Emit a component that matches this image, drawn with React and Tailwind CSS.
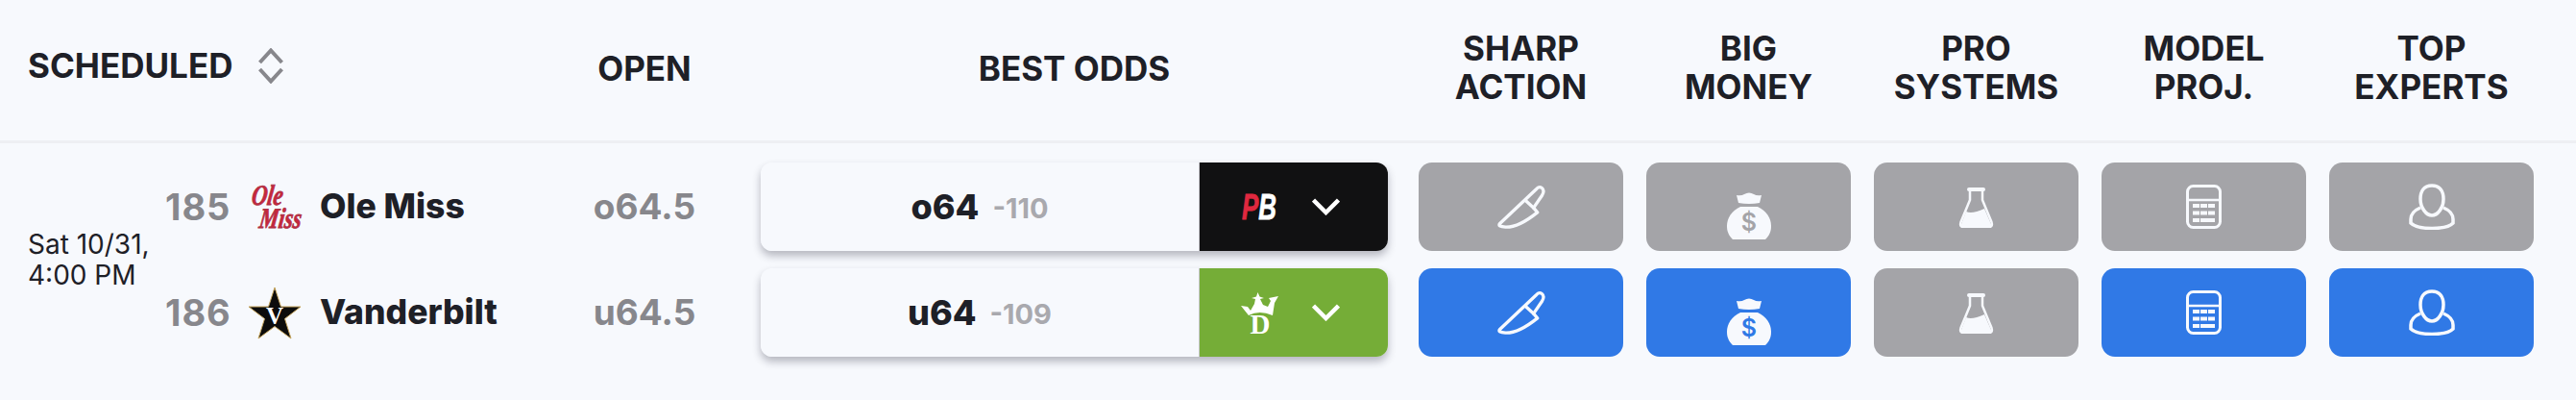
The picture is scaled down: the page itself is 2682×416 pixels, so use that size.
const Knife = () => (
  <svg width="50" height="47" viewBox="295 128 150 140" fill="none" stroke="currentColor" strokeWidth="10" strokeLinejoin="round">
    <path d="M418 140 L302 250 Q296 258 320 260 Q360 262 420 214 L408 200 L434 162 Q444 146 434 138 Q426 132 418 140 Z" />
    <path d="M382 176 L410 202" />
  </svg>
);

const Bag = ({ dollar }) => (
  <svg width="48" height="50" viewBox="0 0 48 50" className="mt-5">
    <path fill="currentColor" d="M11 3 Q16 4 19 2 Q24 -1 29 2 Q32 4 37 3 L35 11 Q24 13 13 11 Z" />
    <path fill="currentColor" d="M15 15 H33 C42 19 47 27 47 35 C47 41 45 45 41 49 H7 C3 45 1 41 1 35 C1 27 6 19 15 15 Z" />
    <text x="24" y="40" textAnchor="middle" fontSize="25" fontWeight="600" fill={dollar} fontFamily="Inter, sans-serif">$</text>
  </svg>
);

const Flask = () => (
  <svg width="37" height="43" viewBox="0 0 37 43" fill="none" stroke="currentColor" strokeWidth="2.5">
    <path strokeWidth="4" strokeLinecap="round" d="M11 3 H26" />
    <path d="M12 3 V14 L2.5 37 Q1 42 5 42 H32 Q36 42 34.500 37 L25 14 V3" />
    <path fill="currentColor" stroke="none" d="M8 26 Q14 29 27 23 L34 39 Q35 42 32 42 H5 Q2 42 3 39 Z" />
  </svg>
);

const Calculator = () => (
  <svg width="37" height="46" viewBox="0 0 37 46" fill="none" stroke="currentColor" strokeWidth="3">
    <rect x="1.500" y="1.500" width="34" height="43" rx="6" />
    <path strokeWidth="2.500" d="M2 16 H35" />
    <g fill="currentColor" stroke="none">
      <rect x="7" y="20" width="7" height="4" />
      <rect x="15" y="20" width="7" height="4" />
      <rect x="23" y="20" width="7" height="4" />
      <rect x="7" y="27.500" width="7" height="4" />
      <rect x="15" y="27.500" width="7" height="4" />
      <rect x="23" y="27.500" width="7" height="4" />
      <rect x="7" y="35" width="7" height="4" />
      <rect x="15" y="35" width="15" height="4" />
    </g>
  </svg>
);

const Person = () => (
  <svg width="48" height="48" viewBox="0 0 48 48" fill="none" stroke="currentColor" strokeWidth="3.500">
    <path d="M24 2 C15 2 12 9 12 16 C12 25 18 33 24 33 C30 33 36 25 36 16 C36 9 33 2 24 2 Z" />
    <path d="M12 25 C5 28 2 32 2 37 V41 C6 45 15 46.500 24 46.500 C33 46.500 42 45 46 41 V37 C46 32 43 28 36 25" />
  </svg>
);

const Chevron = () => (
  <svg width="29" height="18" viewBox="0 0 29 18" fill="none" stroke="white" strokeWidth="4.500">
    <path d="M1.500 2 L14.500 15 L27.500 2" />
  </svg>
);

const OleMiss = () => (
  <svg width="60" height="64" viewBox="0 -8 60 64" fill="#c8283c" stroke="#a83044" strokeWidth="0.800" fontFamily="Liberation Serif, serif" fontStyle="italic" fontWeight="700">
    <text fontSize="30" transform="translate(3 22) skewX(-8) scale(0.75 1)">Ole</text>
    <text fontSize="30" transform="translate(11 46) skewX(-8) scale(0.75 1)">Miss</text>
  </svg>
);

const Vandy = () => (
  <svg width="56" height="55" viewBox="0 0 56 55">
    <polygon points="28,1 34.500,21 55,21 38.500,33.500 45,54 28,41.500 11,54 17.500,33.500 1,21 21.500,21" fill="#0c0c0c" stroke="#c5a45d" strokeWidth="1" />
    <text x="28" y="39" textAnchor="middle" fontSize="25" fontWeight="700" fill="white" fontFamily="Liberation Serif, serif">V</text>
  </svg>
);

const PointsBet = () => (
  <svg width="38" height="46" viewBox="0 -9 38 46" fontFamily="Liberation Sans, sans-serif" fontStyle="italic" fontWeight="700" strokeWidth="0.800">
    <text fontSize="37" transform="translate(0 27) scale(0.7 1)"><tspan fill="#e0283f" stroke="#e0283f">P</tspan><tspan fill="white" stroke="white">B</tspan></text>
  </svg>
);

const DraftKings = () => (
  <svg width="39" height="55" viewBox="0 -6 39 55" fill="white">
    <path d="M0 14 L7 15 L10 19 L14 12 L15 7 L11 6 L16 4.500 L17.500 0 L19.500 4.500 L24 6 L20 7 L23 13 L28 15 L31 9 L29 6 L39 4 L35 11 L33 24 Q19 18 8 24 Z" />
    <text x="20" y="43" textAnchor="middle" fontSize="29" fontWeight="700" stroke="#75ad37" strokeWidth="1" paintOrder="stroke" fontFamily="Liberation Serif, serif">D</text>
  </svg>
);

const columns = [
  ["SHARP", "ACTION"],
  ["BIG", "MONEY"],
  ["PRO", "SYSTEMS"],
  ["MODEL", "PROJ."],
  ["TOP", "EXPERTS"],
];

const rows = [
  {
    line: "o64",
    juice: "-110",
    book: "bg-[#111112]",
    logo: <PointsBet />,
    actions: ["gray", "gray", "gray", "gray", "gray"],
  },
  {
    line: "u64",
    juice: "-109",
    book: "bg-[#75ad37]",
    logo: <DraftKings />,
    actions: ["blue", "blue", "gray", "blue", "blue"],
  },
];

const teams = [
  { num: "185", logo: <OleMiss />, name: "Ole Miss", open: "o64.5" },
  { num: "186", logo: <Vandy />, name: "Vanderbilt", open: "u64.5" },
];

const ActionIcon = ({ index, dollar }) => {
  if (index === 0) return <Knife />;
  if (index === 1) return <Bag dollar={dollar} />;
  if (index === 2) return <Flask />;
  if (index === 3) return <Calculator />;
  return <Person />;
};

export default function App() {
  return (
    <div className="h-[416px] w-[2682px] overflow-hidden bg-[#f7f9fd] font-['Inter',sans-serif] text-[#1e2027]">
      <div className="flex h-[149px] items-center border-b-[3px] border-[#eeeff3] pl-[29px] text-[35px] leading-[40px] font-bold">
        <div className="flex w-[542px] items-center gap-[27px] pb-[10px]">
          <span>SCHEDULED</span>
          <svg width="26" height="37" viewBox="0 0 26 37" fill="none" stroke="#87878c" strokeWidth="4">
            <path d="M1.500 15 L13 2.500 L24.500 15" />
            <path d="M1.500 22 L13 34.500 L24.500 22" />
          </svg>
        </div>
        <div className="w-[200px] pb-[5px] text-center">OPEN</div>
        <div className="ml-[21px] w-[653px] pb-[5px] text-center">BEST ODDS</div>
        <div className="ml-[32px] flex gap-[24px] pb-[6px]">
          {columns.map((col) => (
            <div key={col[0]} className="w-[213px] text-center">
              <div>{col[0]}</div>
              <div>{col[1]}</div>
            </div>
          ))}
        </div>
      </div>

      <div className="flex pt-[20px] pl-[29px]">
        <div className="flex w-[143px] items-center pb-[1px] text-[28px] leading-[32px]">
          <div>
            Sat 10/31,
            <br />
            4:00 PM
          </div>
        </div>

        <div className="flex w-[399px] flex-col gap-[18px]">
          {teams.map((t) => (
            <div key={t.num} className="flex h-[92px] items-center text-[35.500px] font-extrabold">
              <span className="w-[86px] text-[38px] font-bold tracking-[1px] text-[#87878c]">{t.num}</span>
              <span className="flex w-[75px] items-center">{t.logo}</span>
              <span>{t.name}</span>
            </div>
          ))}
        </div>

        <div className="flex w-[200px] flex-col gap-[18px]">
          {teams.map((t) => (
            <div key={t.num} className="flex h-[92px] items-center justify-center text-[37px] font-bold text-[#87878c]">
              {t.open}
            </div>
          ))}
        </div>

        <div className="ml-[21px] flex w-[653px] flex-col gap-[18px]">
          {rows.map((r) => (
            <div key={r.line} className="flex h-[92px] overflow-hidden rounded-[12px] shadow-[0_5px_9px_rgba(30,30,50,0.3)]">
              <div className="flex w-[456px] items-center justify-center gap-[14px] bg-[#f7f9fd]">
                <span className="text-[36px] font-extrabold">{r.line}</span>
                <span className="pt-[3px] text-[29px] font-bold text-[#a9a9ae]">{r.juice}</span>
              </div>
              <div className={`flex w-[197px] items-center gap-[35px] border-l border-[#c9c9ce] pl-[43px] ${r.book}`}>
                <span className="flex w-[39px] justify-center">{r.logo}</span>
                <Chevron />
              </div>
            </div>
          ))}
        </div>

        <div className="ml-[32px] flex flex-col gap-[18px]">
          {rows.map((r) => (
            <div key={r.line} className="flex gap-[24px]">
              {r.actions.map((a, i) => (
                <div
                  key={i}
                  className={`flex h-[92px] w-[213px] items-center justify-center rounded-[14px] text-[#f7f9fd] ${
                    a === "blue" ? "bg-[#3079e6]" : "bg-[#a4a4a8]"
                  }`}
                >
                  <ActionIcon index={i} dollar={a === "blue" ? "#3079e6" : "#a4a4a8"} />
                </div>
              ))}
            </div>
          ))}
        </div>
      </div>
    </div>
  );
}
